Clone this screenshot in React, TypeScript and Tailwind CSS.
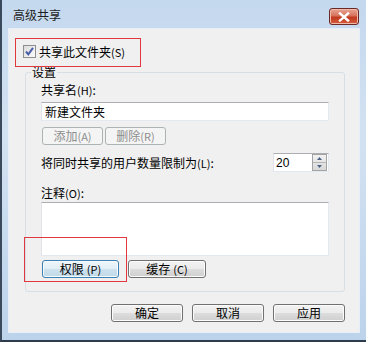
import { ReactNode } from "react";

const font = "font-['Noto_Sans_CJK_SC','Noto_Sans',sans-serif]";

function WinButton({
  children,
  disabled,
  focused,
  className = ""
}: {
  children: ReactNode;
  disabled?: boolean;
  focused?: boolean;
  className?: string;
}) {
  const tone = disabled
    ? "border-[#adb2b5] bg-[#f4f4f4] text-[#8d8d8d]"
    : focused
      ? "border-[#3c7fb1] bg-[linear-gradient(#eef6fb,#e2eef6_50%,#cfe2ee_50%,#c0d8e8)] text-black shadow-[inset_0_0_0_1px_#f6fbfe]"
      : "border-[#707070] bg-[linear-gradient(#f2f2f2,#ebebeb_50%,#dddddd_50%,#cfcfcf)] text-black shadow-[inset_0_0_0_1px_#fcfcfc]";
  return (
    <button
      className={`flex h-[18px] shrink-0 items-center justify-center rounded-[3px] border text-[12px] leading-none ${tone} ${className}`}
    >
      {children}
    </button>
  );
}

function Checkbox() {
  return (
    <span className="flex h-[13px] w-[13px] shrink-0 items-center justify-center border border-[#8e8f8f] bg-[linear-gradient(135deg,#dcdcdc,#fbfbfb)]">
      <svg width="11" height="11" viewBox="0 0 11 11">
        <path
          d="M2 5.5 L4.3 8.3 L9 1.8"
          fill="none"
          stroke="#4a5fa8"
          strokeWidth="2"
        />
      </svg>
    </span>
  );
}

function Field({ className = "", children }: { className?: string; children?: ReactNode }) {
  return (
    <div
      className={`border border-[#abadb3] border-r-[#e3e9ef] border-b-[#e3e9ef] border-l-[#e2e3ea] bg-white ${className}`}
    >
      {children}
    </div>
  );
}

export default function App() {
  return (
    <div
      className={`${font} relative flex h-[342px] w-[366px] flex-col border-b-2 border-l-2 border-b-[#2d3c4c] border-l-[#3a4a5c] bg-[linear-gradient(#c4d8ee,#d3e2f2_40%,#bcd3eb)] pr-[6px] pb-[7px] pl-[6px] text-[12px] text-black`}
    >
      {/* title bar */}
      <div className="flex h-[28px] shrink-0 items-start justify-between">
        <span className="pt-[7px] pl-[5px] text-[12px] leading-[16px] text-[#1e1e1e]">
          高级共享
        </span>
        <div className="mt-[8px] mr-[1px] flex h-[17px] w-[30px] items-center justify-center rounded-[3px] border border-[#6b2a24] bg-[linear-gradient(#e8a593,#d7725c_45%,#c0391f_55%,#d35d3c)] shadow-[inset_0_0_0_1px_#f0b8a8]">
          <svg width="12" height="10" viewBox="0 0 12 10">
            <path
              d="M2 1.5 L10 8.5 M10 1.5 L2 8.5"
              stroke="#fff"
              strokeWidth="2.4"
              strokeLinecap="square"
            />
          </svg>
        </div>
      </div>

      {/* client area */}
      <div className="relative flex-1 border border-[#e6eef7] bg-[#f0f0f0]">
        <div className="flex flex-col pt-[16px] pl-[14px]">
          <label className="flex h-[13px] items-center gap-[3px]">
            <Checkbox />
            <span className="leading-none whitespace-nowrap">
              共享此文件夹<span className="text-[11px]">(S)</span>
            </span>
          </label>

          <fieldset className="mt-[7px] mr-[14px] ml-[2px] h-[227px] rounded-[3px] border border-[#d5dfe5] px-[15px]">
            <legend className="-ml-[10px] px-[1px] leading-[14px]">设置</legend>
            <div className="flex flex-col">
              <span className="mt-[4px] leading-[14px]">
                共享名<span className="text-[11px]">(H)</span>:
              </span>
              <Field className="mt-[5px] flex h-[19px] items-center px-[3px] leading-none">
                新建文件夹
              </Field>
              <div className="mt-[6px] flex gap-[2px] pl-[1px]">
                <WinButton disabled className="w-[61px]">
                  添加<span className="text-[11px]">(A)</span>
                </WinButton>
                <WinButton disabled className="w-[61px]">
                  删除<span className="text-[11px]">(R)</span>
                </WinButton>
              </div>
              <div className="mt-[8px] flex items-center justify-between">
                <span className="leading-[14px] whitespace-nowrap">
                  将同时共享的用户数量限制为<span className="text-[11px]">(L)</span>:
                </span>
                <Field className="flex h-[19px] w-[56px] shrink-0 items-center">
                  <span className="flex-1 pl-[2px] font-['Liberation_Sans',sans-serif] text-[12px] leading-none">
                    20
                  </span>
                  <div className="mr-[1px] flex h-[17px] w-[15px] flex-col border border-[#a3a3a3] bg-[linear-gradient(#f2f2f2,#d8d8d8)]">
                    <div className="flex flex-1 items-center justify-center border-b border-[#b5b5b5]">
                      <svg width="5" height="3" viewBox="0 0 5 3">
                        <path d="M0 3 L2.5 0 L5 3 Z" fill="#4d6185" />
                      </svg>
                    </div>
                    <div className="flex flex-1 items-center justify-center">
                      <svg width="5" height="3" viewBox="0 0 5 3">
                        <path d="M0 0 L2.5 3 L5 0 Z" fill="#4d6185" />
                      </svg>
                    </div>
                  </div>
                </Field>
              </div>
              <span className="mt-[14px] leading-[14px]">
                注释<span className="text-[11px]">(O)</span>:
              </span>
              <Field className="mt-[2px] h-[54px]" />
              <div className="mt-[4px] flex gap-[9px] pl-[1px]">
                <WinButton focused className="w-[77px]">
                  权限<span className="ml-[3px] text-[11px]">(P)</span>
                </WinButton>
                <WinButton className="w-[78px]">
                  缓存<span className="ml-[3px] text-[11px]">(C)</span>
                </WinButton>
              </div>
            </div>
          </fieldset>

          <div className="mt-[12px] flex justify-end gap-[9px] pr-[14px]">
            <WinButton className="w-[72px]">确定</WinButton>
            <WinButton className="w-[72px]">取消</WinButton>
            <WinButton className="w-[72px]">应用</WinButton>
          </div>
        </div>

        {/* red annotation boxes */}
        <div className="pointer-events-none absolute top-[9px] left-[6px] h-[29px] w-[126px] border border-[#e0383c]" />
        <div className="pointer-events-none absolute top-[208px] left-[15px] h-[45px] w-[103px] border border-[#e0383c]" />
      </div>
    </div>
  );
}
